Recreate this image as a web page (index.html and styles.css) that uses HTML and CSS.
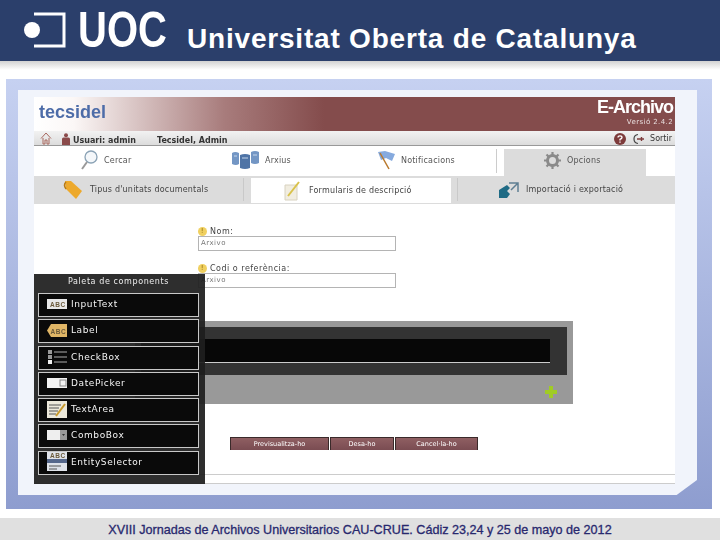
FILE: index.html
```html
<!DOCTYPE html>
<html lang="ca">
<head>
    <meta charset="UTF-8">
    <title>E-Archivo</title>
    <link rel="stylesheet" href="styles.css">
</head>
<body>
    <header class="uoc-header">
        <svg class="uoc-mark" width="42" height="36" viewBox="0 0 42 36">
            <circle cx="8" cy="18" r="8" fill="#fff"/>
            <path d="M10 2H40V34H10" fill="none" stroke="#fff" stroke-width="3"/>
        </svg>
        <span class="uoc-letters">UOC</span>
        <span class="uoc-name">Universitat Oberta de Catalunya</span>
    </header>
    <div class="uoc-shade"></div>

    <div class="frame">
        <div class="sheet">
            <div class="app">
                <div class="banner">
                    <span class="brand">tecsidel</span>
                    <div class="product">
                        <span class="product-name">E-Archivo</span>
                        <span class="product-version">Versió 2.4.2</span>
                    </div>
                </div>

                <div class="toolbar">
                    <svg class="tool-home" width="12" height="13" viewBox="0 0 12 13">
                        <path d="M1 6.500 6 1l5 5.500M3 6v6h2V8h2v4h2V6" fill="none" stroke="#a9685f" stroke-width="1"/>
                    </svg>
                    <svg class="tool-user" width="8" height="12" viewBox="0 0 8 12">
                        <circle cx="4" cy="2.200" r="2" fill="#8a4a4a"/>
                        <path d="M0 12V6q0-1.500 1.500-1.500h5Q8 4.500 8 6v6z" fill="#8a4a4a"/>
                    </svg>
                    <span class="tool-user-name">Usuari: admin</span>
                    <span class="tool-company">Tecsidel, Admin</span>
                    <svg class="tool-help" width="12" height="12" viewBox="0 0 12 12">
                        <circle cx="6" cy="6" r="6" fill="#7d3b3b"/>
                        <path d="M4 4.500Q4 2.800 6 2.800t2 1.700Q8 5.600 6 6.300V7.500M6 8.500v1.300" fill="none" stroke="#fff" stroke-width="1.300"/>
                    </svg>
                    <svg class="tool-exit" width="12" height="12" viewBox="0 0 12 12">
                        <path d="M5 1.500Q1 2 1 6t4 4.500" fill="none" stroke="#444" stroke-width="1.200"/>
                        <path d="M4 6h7M8.500 4v4" fill="none" stroke="#7d3b3b" stroke-width="1.400"/>
                    </svg>
                    <span class="tool-exit-text">Sortir</span>
                </div>

                <nav class="tabs">
                    <div class="tab tab-search">
                        <svg width="17" height="23" viewBox="0 0 17 23">
                            <circle cx="10" cy="8" r="6" fill="#f4f7fa" stroke="#8aa2b5" stroke-width="1.300"/>
                            <path d="M6 13 1 20" stroke="#9a9a9a" stroke-width="2"/>
                        </svg>
                        <span>Cercar</span>
                    </div>
                    <div class="tab tab-files">
                        <svg width="27" height="20" viewBox="0 0 27 20">
                            <path d="M0 3q3-2 7 0v11q-3 2-7 0zM19 2q4-2 8 0v11q-4 2-8 0z" fill="#7396c4"/>
                            <path d="M8 5q5-2 10 0v13q-5 2-10 0z" fill="#4f74a6"/>
                            <path d="M10 8h6M21 5h4M2 6h3" stroke="#c5d5ea"/>
                        </svg>
                        <span>Arxius</span>
                    </div>
                    <div class="tab tab-notices">
                        <svg width="17" height="19" viewBox="0 0 17 19">
                            <path d="M0 1 7 0l10 3-3 7-6-3-5 2z" fill="#86aade"/>
                            <path d="M2 2 11 18" stroke="#b9792d" stroke-width="1.500"/>
                        </svg>
                        <span>Notificacions</span>
                    </div>
                    <div class="tab tab-options">
                        <svg width="17" height="17" viewBox="0 0 17 17">
                            <circle cx="8.500" cy="8.500" r="5" fill="none" stroke="#8a8a8a" stroke-width="3"/>
                            <path d="M8.500 0v3M8.500 14v3M0 8.500h3M14 8.500h3M2.500 2.500l2 2M12.500 12.500l2 2M14.500 2.500l-2 2M4.500 12.500l-2 2" stroke="#8a8a8a" stroke-width="2.200"/>
                        </svg>
                        <span>Opcions</span>
                    </div>
                </nav>

                <nav class="subtabs">
                    <div class="subtab subtab-types">
                        <svg width="20" height="20" viewBox="0 0 20 20">
                            <path d="M2 1h6l11 10-6 8L3 9z" fill="#eda92c"/>
                            <path d="M3 2q-3 3 0 7" fill="none" stroke="#b97a12" stroke-width="1.500"/>
                        </svg>
                        <span>Tipus d'unitats documentals</span>
                    </div>
                    <div class="subtab subtab-forms">
                        <svg width="18" height="20" viewBox="0 0 18 20">
                            <path d="M1 4h12v15H1z" fill="#f1ede0" stroke="#d8d2bf"/>
                            <path d="M4 15 15 1" stroke="#d9c24a" stroke-width="2"/>
                        </svg>
                        <span>Formularis de descripció</span>
                    </div>
                    <div class="subtab subtab-transfer">
                        <svg width="20" height="18" viewBox="0 0 20 18">
                            <path d="M0 9 8 4l3 3-3 3 3 3-3 4H0z" fill="#1f6b85"/>
                            <path d="M10 2h9v9M19 2 12 9" fill="none" stroke="#5f7f93" stroke-width="1.500"/>
                        </svg>
                        <span>Importació i exportació</span>
                    </div>
                </nav>

                <main class="content">
                    <div class="field">
                        <label class="field-label"><span class="field-mark">!</span>Nom:</label>
                        <div class="field-input">Arxivo</div>
                    </div>
                    <div class="field">
                        <label class="field-label"><span class="field-mark">!</span>Codi o referència:</label>
                        <div class="field-input">Arxivo</div>
                    </div>

                    <section class="drop-panel">
                        <div class="drop-dark">
                            <div class="drop-row"></div>
                        </div>
                        <svg class="drop-add" width="12" height="12" viewBox="0 0 12 12">
                            <path d="M4 0h4v4h4v4H8v4H4V8H0V4h4z" fill="#a0cc24"/>
                        </svg>
                    </section>

                    <div class="actions">
                        <button class="action action-preview">Previsualitza-ho</button>
                        <button class="action action-save">Desa-ho</button>
                        <button class="action action-cancel">Cancel·la-ho</button>
                    </div>
                </main>
                <div class="app-rule"></div>

                <aside class="palette">
                    <h2 class="palette-title">Paleta de components</h2>
                    <div class="palette-item">
                        <svg width="20" height="10" viewBox="0 0 20 10"><rect width="20" height="10" fill="#e8e8e8"/><text x="3" y="8" class="icon-text">ABC</text></svg>
                        <span>InputText</span>
                    </div>
                    <div class="palette-item">
                        <svg width="20" height="13" viewBox="0 0 20 13"><path d="M4 0h16v13H4L0 6.500z" fill="#e0b666"/><text x="3.500" y="9.500" class="icon-text">ABC</text></svg>
                        <span>Label</span>
                    </div>
                    <div class="palette-item">
                        <svg width="20" height="16" viewBox="0 0 20 16"><path d="M1 1h4v4H1zM1 6h4v4H1z" fill="#999"/><path d="M1 11h4v4H1z" fill="#eee"/><path d="M7 3h13M7 8h13M7 13h13" stroke="#777" stroke-width="1.500"/></svg>
                        <span>CheckBox</span>
                    </div>
                    <div class="palette-item">
                        <svg width="20" height="10" viewBox="0 0 20 10"><rect width="20" height="10" fill="#f2f2f2"/><rect x="13" y="2" width="6" height="6" fill="none" stroke="#888"/></svg>
                        <span>DatePicker</span>
                    </div>
                    <div class="palette-item">
                        <svg width="20" height="17" viewBox="0 0 20 17"><rect width="20" height="17" fill="#ece8da"/><path d="M2 4h12M2 7h10M2 10h9M2 13h7" stroke="#555"/><path d="M9 15 18 3" stroke="#c99a2c" stroke-width="2"/></svg>
                        <span>TextArea</span>
                    </div>
                    <div class="palette-item">
                        <svg width="20" height="10" viewBox="0 0 20 10"><rect width="20" height="10" fill="#eee"/><rect x="13" width="7" height="10" fill="#999"/><path d="M15 4h3l-1.500 2z" fill="#333"/></svg>
                        <span>ComboBox</span>
                    </div>
                    <div class="palette-item">
                        <svg width="20" height="19" viewBox="0 0 20 19"><rect width="20" height="19" fill="#dfe3ea"/><rect y="7" width="20" height="4" fill="#56688c"/><path d="M2 14h12M2 17h8" stroke="#555"/><text x="3" y="6" class="icon-text">ABC</text></svg>
                        <span>EntitySelector</span>
                    </div>
                </aside>
            </div>
        </div>
    </div>

    <footer class="slide-footer">XVIII Jornadas de Archivos Universitarios CAU-CRUE. Cádiz 23,24 y 25 de mayo de 2012</footer>
</body>
</html>
```

FILE: styles.css
```css
body {
    margin: 0;
    width: 720px;
    height: 540px;
    overflow: hidden;
    background-color: #fff;
    font-family: "DejaVu Sans", sans-serif;
}

/* cabecera UOC */
.uoc-header {
    height: 61px;
    background-color: #2b3f6b;
    display: flex;
    align-items: flex-start;
    color: #fff;
    font-family: "Liberation Sans", sans-serif;
    font-weight: bold;
}
.uoc-mark {
    margin: 12px 0 0 24px;
}
.uoc-letters {
    margin: 5px 0 0 12px;
    width: 89px;
    font-size: 50px;
    line-height: 50px;
    transform: scaleX(0.8);
    transform-origin: left;
    white-space: nowrap;
}
.uoc-name {
    margin: 24px 0 0 20px;
    font-size: 28px;
    line-height: 30px;
    letter-spacing: 0.800px;
    white-space: nowrap;
}
.uoc-shade {
    height: 9px;
    background: linear-gradient(#d2d2d2, #fff);
}

/* marco azul */
.frame {
    margin: 9px 8px 0 6px;
    height: 430px;
    box-sizing: border-box;
    padding: 11px 15px 14px 12px;
    background: linear-gradient(#c6d1f1, #8e9dcf);
}
.sheet {
    height: 100%;
    box-sizing: border-box;
    padding: 7px 22px 0 16px;
    background-color: #f1f4fb;
    clip-path: polygon(0 0, 100% 0, 100% 96.300%, 97% 100%, 0 100%);
}
.app {
    position: relative;
    height: 387px;
    background-color: #fff;
    display: flex;
    flex-direction: column;
    filter: blur(0.3px);
}

/* banner */
.banner {
    height: 34px;
    flex: none;
    display: flex;
    justify-content: space-between;
    background: linear-gradient(90deg, #fff 0, #fbf7f6 40px, #a87c7c 190px, #844c4c 290px);
}
.brand {
    margin: 6px 0 0 5px;
    font-family: "Liberation Sans", sans-serif;
    font-size: 18px;
    line-height: 18px;
    font-weight: bold;
    color: #4d6ca8;
}
.product {
    display: flex;
    flex-direction: column;
    align-items: flex-end;
    padding: 1px 2px 0 0;
    color: #fff;
}
.product-name {
    font-family: "Liberation Sans", sans-serif;
    font-size: 18px;
    line-height: 19px;
    font-weight: bold;
    letter-spacing: -1px;
}
.product-version {
    font-size: 7px;
    line-height: 10px;
    letter-spacing: 0.4px;
    color: #e8dede;
}

/* barra de usuario */
.toolbar {
    height: 15px;
    flex: none;
    box-sizing: border-box;
    padding-top: 1px;
    border-bottom: 1px solid #999;
    background: linear-gradient(#f2f2f2, #dcdcdc);
    display: flex;
    align-items: center;
    font-size: 8px;
    color: #333;
}
.tool-home {
    margin-left: 6px;
}
.tool-user {
    margin-left: 10px;
}
.tool-user-name {
    margin: 3px 0 0 3px;
    width: 84px;
    font-weight: bold;
}
.tool-company {
    margin-top: 3px;
    font-weight: bold;
}
.tool-help {
    margin-left: auto;
}
.tool-exit {
    margin-left: 7px;
}
.tool-exit-text {
    margin: 0 3px 0 5px;
}

/* pestañas */
.tabs {
    height: 30px;
    flex: none;
    display: flex;
    font-size: 8px;
    letter-spacing: 0.2px;
    color: #555;
}
.tab {
    display: flex;
    align-items: center;
    gap: 6px;
    box-sizing: border-box;
    padding-bottom: 2px;
}
.tab-search {
    width: 151px;
    padding-left: 47px;
}
.tab-files {
    width: 158px;
    padding-left: 47px;
}
.tab-notices {
    width: 154px;
    padding-left: 35px;
    border-right: 1px solid #ccc;
    margin: 3px 0;
}
.tab-options {
    width: 142px;
    margin: 3px 0 0 7px;
    padding: 0 0 5px 40px;
    background-color: #dcdcdc;
}

.subtabs {
    height: 28px;
    flex: none;
    display: flex;
    background-color: #dcdcdc;
    font-size: 8px;
    letter-spacing: 0.2px;
    color: #444;
}
.subtab {
    display: flex;
    align-items: center;
    gap: 7px;
    box-sizing: border-box;
}
.subtab-types {
    width: 210px;
    padding-left: 29px;
    border-right: 1px solid #c9c9c9;
    margin: 2px 0 3px;
}
.subtab-forms {
    width: 200px;
    margin: 2px 6px 1px 7px;
    padding-left: 33px;
    background-color: #fff;
}
.subtab-transfer {
    flex: 1;
    padding-left: 41px;
    border-left: 1px solid #c9c9c9;
    margin: 2px 0 3px;
}

/* formulario */
.content {
    flex: 1;
    padding-top: 22px;
    position: relative;
}
.field {
    margin: 0 0 12px 164px;
    width: 198px;
}
.field-label {
    display: flex;
    align-items: center;
    gap: 3px;
    height: 10px;
    font-size: 8px;
    letter-spacing: 0.5px;
    color: #444;
}
.field-mark {
    width: 9px;
    height: 9px;
    border-radius: 50%;
    background-color: #f0d060;
    color: #8a6a10;
    font-size: 7px;
    line-height: 9px;
    text-align: center;
}
.field-input {
    height: 15px;
    box-sizing: border-box;
    border: 1px solid #b4b4b4;
    padding-left: 2px;
    background-color: #fff;
    font-size: 7px;
    line-height: 13px;
    letter-spacing: 0.5px;
    color: #777;
}

.drop-panel {
    position: relative;
    margin: 33px 0 0 101px;
    width: 438px;
    height: 83px;
    box-sizing: border-box;
    padding: 6px;
    background-color: #999;
}
.drop-dark {
    height: 48px;
    box-sizing: border-box;
    padding: 12px 17px 0 0;
    background-color: #333;
}
.drop-row {
    height: 24px;
    box-sizing: border-box;
    border-bottom: 1px solid #ccc;
    background-color: #070707;
}
.drop-add {
    position: absolute;
    right: 16px;
    bottom: 6px;
}

.actions {
    display: flex;
    gap: 1px;
    margin: 33px 0 0 196px;
}
.action {
    height: 13px;
    padding: 0;
    border: 1px solid #3a2a2a;
    border-bottom: none;
    background: linear-gradient(#8f5f62, #7a4c52);
    color: #fff;
    font-family: "DejaVu Sans", sans-serif;
    font-size: 6.500px;
    line-height: 12px;
}
.action-preview {
    width: 99px;
}
.action-save {
    width: 64px;
}
.action-cancel {
    width: 83px;
}
.app-rule {
    height: 8px;
    flex: none;
    border-top: 1px solid #ccc;
    border-bottom: 1px solid #ccc;
}

/* paleta flotante */
.palette {
    position: absolute;
    left: 0;
    top: 177px;
    width: 171px;
    height: 210px;
    box-sizing: border-box;
    padding: 0 6px 0 4px;
    background-color: rgba(30, 30, 30, 0.93);
}
.palette-title {
    margin: 0 0 3px;
    height: 16px;
    font-size: 8px;
    line-height: 15px;
    font-weight: normal;
    letter-spacing: 0.6px;
    text-align: center;
    color: #eee;
}
.palette-item {
    height: 24px;
    margin-bottom: 2.300px;
    box-sizing: border-box;
    border: 1px solid #c8c8c8;
    padding: 0 0 2px 8px;
    background-color: #0a0a0a;
    display: flex;
    align-items: center;
    gap: 4px;
    font-size: 9px;
    letter-spacing: 0.6px;
    color: #f4f4f4;
}
.icon-text {
    font-family: "Liberation Sans", sans-serif;
    font-size: 6.500px;
    font-weight: bold;
    fill: #6b5a3a;
}

.slide-footer {
    margin-top: 9px;
    height: 22px;
    background-color: #e0e0e0;
    font-family: "Liberation Sans", sans-serif;
    font-size: 12.600px;
    line-height: 24px;
    text-align: center;
    color: #28286e;
    -webkit-text-stroke: 0.3px #28286e;
}
```
